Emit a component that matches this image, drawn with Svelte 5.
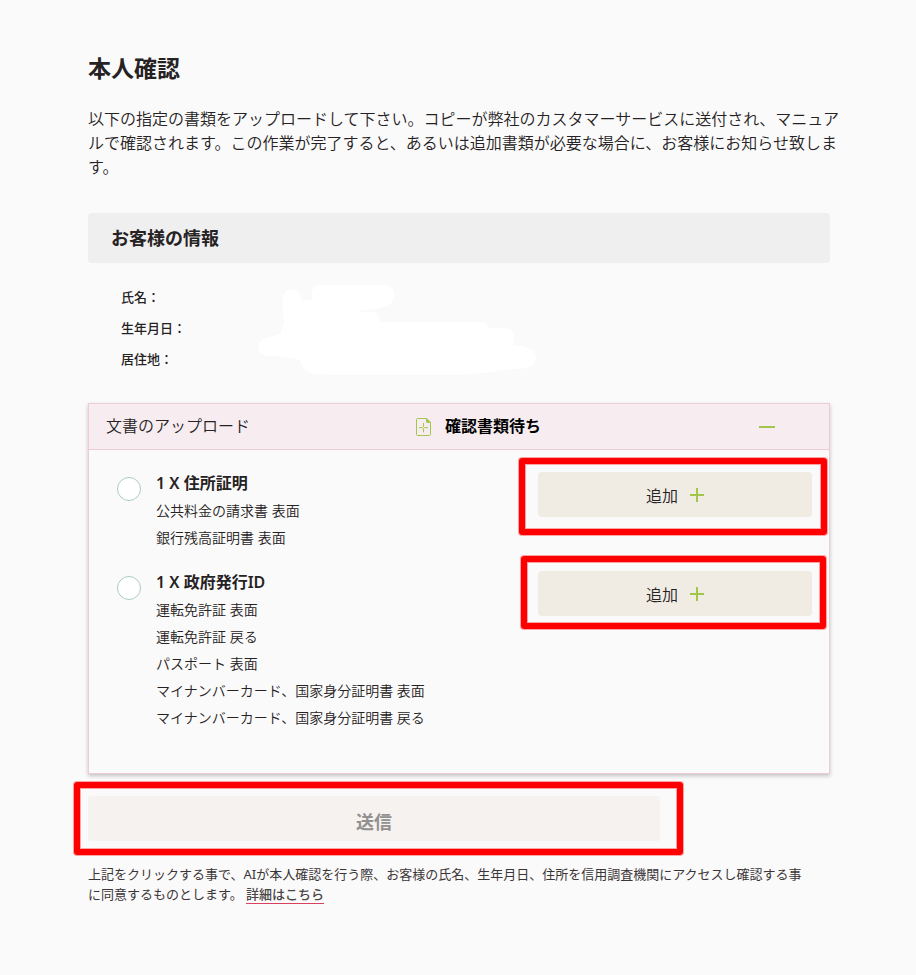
<script lang="ts">
  let open = $state(true)

  const fields = ['氏名：', '生年月日：', '居住地：']

  const documents = [
    {
      title: '1 X 住所証明',
      accepted: ['公共料金の請求書 表面', '銀行残高証明書 表面'],
      mark: 'mark-address',
    },
    {
      title: '1 X 政府発行ID',
      accepted: [
        '運転免許証 表面',
        '運転免許証 戻る',
        'パスポート 表面',
        'マイナンバーカード、国家身分証明書 表面',
        'マイナンバーカード、国家身分証明書 戻る',
      ],
      mark: 'mark-id',
    },
  ]
</script>

<main class="page">
  <h1>本人確認</h1>
  <p class="lead">
    以下の指定の書類をアップロードして下さい。コピーが弊社のカスタマーサービスに送付され、マニュア<br />ルで確認されます。この作業が完了すると、あるいは追加書類が必要な場合に、お客様にお知らせ致しま<br />す。
  </p>

  <h2 class="section-bar">お客様の情報</h2>
  <div class="info">
    <dl>
      {#each fields as field}
        <dt>{field}</dt>
        <dd></dd>
      {/each}
    </dl>
    <!-- blanked out customer details -->
    <svg class="redaction" viewBox="534 45 833 270" aria-hidden="true">
      <path
        fill="#fff"
        d="M607 95C607 70 617 57 636 57C655 57 663 71 663 93L700 90C688 72 697 45 720 45H910C932 45 943 57 943 76C942 91 932 105 918 109C890 117 860 121 828 125H870C888 125 898 137 900 156H1200C1212 156 1221 163 1224 174H1272C1294 175 1304 187 1303 203C1302 213 1300 219 1296 225C1338 227 1367 239 1367 263C1367 281 1351 292 1328 295C1275 299 1220 309 1162 314H725C688 313 661 296 660 270C632 262 600 259 562 257C543 254 534 244 534 230C535 213 547 204 566 201C580 197 592 195 603 191C602 179 606 171 612 163Z"
      />
    </svg>
  </div>

  <section class="card">
    <header class="card-header">
      <span class="card-name">文書のアップロード</span>
      <span class="status">
        <svg class="doc-icon" viewBox="0 0 45 54" fill="none" stroke="#a2c54c" stroke-width="3" aria-hidden="true">
          <path d="M5 1.5H32L43.500 13V49Q43.500 52.500 40 52.500H5Q1.500 52.500 1.500 49V5Q1.500 1.500 5 1.500Z" />
          <path d="M32 2V13H43Z" fill="#a2c54c" />
          <path d="M22.500 15V27M22.500 31V43M9 29H20.500M24.500 29H36" />
        </svg>
        <strong>確認書類待ち</strong>
      </span>
      <button class="toggle" type="button" aria-label="開閉" aria-expanded={open} onclick={() => (open = !open)}>
        <svg viewBox="0 0 16 16" stroke="#a2c54c" stroke-width="2" aria-hidden="true">
          <path d="M0 8H16" />
          {#if !open}<path d="M8 0V16" />{/if}
        </svg>
      </button>
    </header>

    {#if open}
      <div class="card-body">
        {#each documents as doc}
          <article class="doc">
            <span class="circle"></span>
            <div class="doc-text">
              <h3>{doc.title}</h3>
              <ul>
                {#each doc.accepted as name}
                  <li>{name}</li>
                {/each}
              </ul>
            </div>
            <div class="action">
              <button class="add" type="button">
                追加
                <svg viewBox="0 0 14 14" stroke="#a2c54c" stroke-width="2" aria-hidden="true">
                  <path d="M7 0V14M0 7H14" />
                </svg>
              </button>
              <span class="mark {doc.mark}"></span>
            </div>
          </article>
        {/each}
      </div>
    {/if}
  </section>

  <div class="submit-row">
    <button class="submit" type="button" disabled>送信</button>
    <span class="mark mark-submit"></span>
  </div>

  <p class="consent">
    上記をクリックする事で、AIが本人確認を行う際、お客様の氏名、生年月日、住所を信用調査機関にアクセスし確認する事<br />に同意するものとします。 <a href="#details">詳細はこちら</a>
  </p>
</main>

<style>
  :global(body) {
    background: #fafafa;
  }

  .page {
    box-sizing: border-box;
    padding: 52px 86px 70px 88px;
    font-family: 'Noto Sans', 'Noto Sans CJK JP', sans-serif;
    font-size: 16px;
    color: #262223;
  }

  h1,
  h2,
  h3,
  p,
  dl,
  dd,
  ul {
    margin: 0;
    padding: 0;
  }

  button {
    border: none;
    font: inherit;
    color: inherit;
  }

  h1 {
    font-size: 23px;
    line-height: 32px;
    font-weight: 700;
  }

  .lead {
    margin-top: 23px;
    line-height: 24px;
    font-weight: 350;
    white-space: nowrap;
  }

  .section-bar {
    margin-top: 34px;
    padding: 0 23px;
    border-radius: 4px;
    background: #efefef;
    font-size: 18px;
    line-height: 50px;
    font-weight: 700;
  }

  .info {
    position: relative;
    padding: 19px 33px 28px;
  }
  .info dl {
    display: grid;
    grid-template-columns: 1fr 3fr;
    font-size: 13px;
    line-height: 31px;
  }
  .info dt {
    font-weight: 500;
  }
  .redaction {
    position: absolute;
    top: 22px;
    left: 170px;
    width: 278px;
    height: 90px;
  }

  .card {
    border: 1px solid #efccd3;
    box-shadow: 0 2px 4px rgba(0, 0, 0, 0.22);
  }
  .card-header {
    display: grid;
    grid-template-columns: 310px 1fr auto;
    align-items: center;
    height: 45px;
    padding: 0 54px 0 17px;
    border-bottom: 1px solid #efccd3;
    background: #f7edf1;
  }
  .card-name,
  .status strong {
    padding-bottom: 3px;
  }
  .card-name {
    font-weight: 350;
  }
  .status {
    display: flex;
    align-items: center;
    gap: 14px;
    color: #000;
  }
  .doc-icon {
    width: 15px;
    height: 18px;
  }
  .toggle {
    display: flex;
    padding: 0;
    background: none;
    cursor: pointer;
  }
  .toggle svg {
    width: 16px;
    height: 16px;
  }

  .card-body {
    display: flex;
    flex-direction: column;
    gap: 18px;
    padding: 20px 17px 42px 28px;
  }
  .doc {
    display: flex;
    align-items: flex-start;
    gap: 15px;
  }
  .circle {
    box-sizing: border-box;
    flex: none;
    width: 24px;
    height: 24px;
    margin-top: 7px;
    border: 1px solid #aacbc6;
    border-radius: 50%;
    background: #fff;
  }
  .doc-text {
    flex: 1;
    line-height: 27px;
  }
  .doc-text h3 {
    font-size: 16px;
    font-weight: 600;
  }
  .doc-text ul {
    list-style: none;
    font-size: 14px;
    font-weight: 350;
  }

  .action {
    position: relative;
    flex: 0 0 274px;
    margin-top: 2px;
  }
  .add {
    display: flex;
    align-items: center;
    justify-content: center;
    gap: 12px;
    width: 100%;
    height: 45px;
    border-radius: 4px;
    background: #f0ebe3;
    font-weight: 350;
    cursor: pointer;
  }
  .add svg {
    width: 14px;
    height: 14px;
  }

  /* red frames drawn over the buttons */
  .mark {
    position: absolute;
    border: 6px solid #f00;
    border-radius: 3px;
    box-shadow:
      0 0 0 1px rgba(255, 0, 0, 0.35),
      inset 0 0 0 1px rgba(255, 0, 0, 0.35);
    pointer-events: none;
  }
  .mark-address {
    inset: -14px -15px -18px -19px;
  }
  .mark-id {
    inset: -15px -14px -13px -17px;
  }
  .mark-submit {
    inset: -14px -23px -14px -14px;
  }

  .submit-row {
    position: relative;
    width: 572px;
    max-width: 100%;
    margin-top: 22px;
  }
  .submit {
    display: block;
    width: 100%;
    height: 45px;
    padding: 4px 0 0;
    border-radius: 3px;
    background: #f6f2ef;
    font-size: 18px;
    font-weight: 700;
    color: #929090;
  }

  .consent {
    margin-top: 23px;
    font-size: 13px;
    line-height: 20px;
    color: #3a3637;
    white-space: nowrap;
  }
  .consent a {
    border-bottom: 1px solid #d9405f;
    font-weight: 500;
    color: #4a4647;
    text-decoration: none;
  }
</style>
